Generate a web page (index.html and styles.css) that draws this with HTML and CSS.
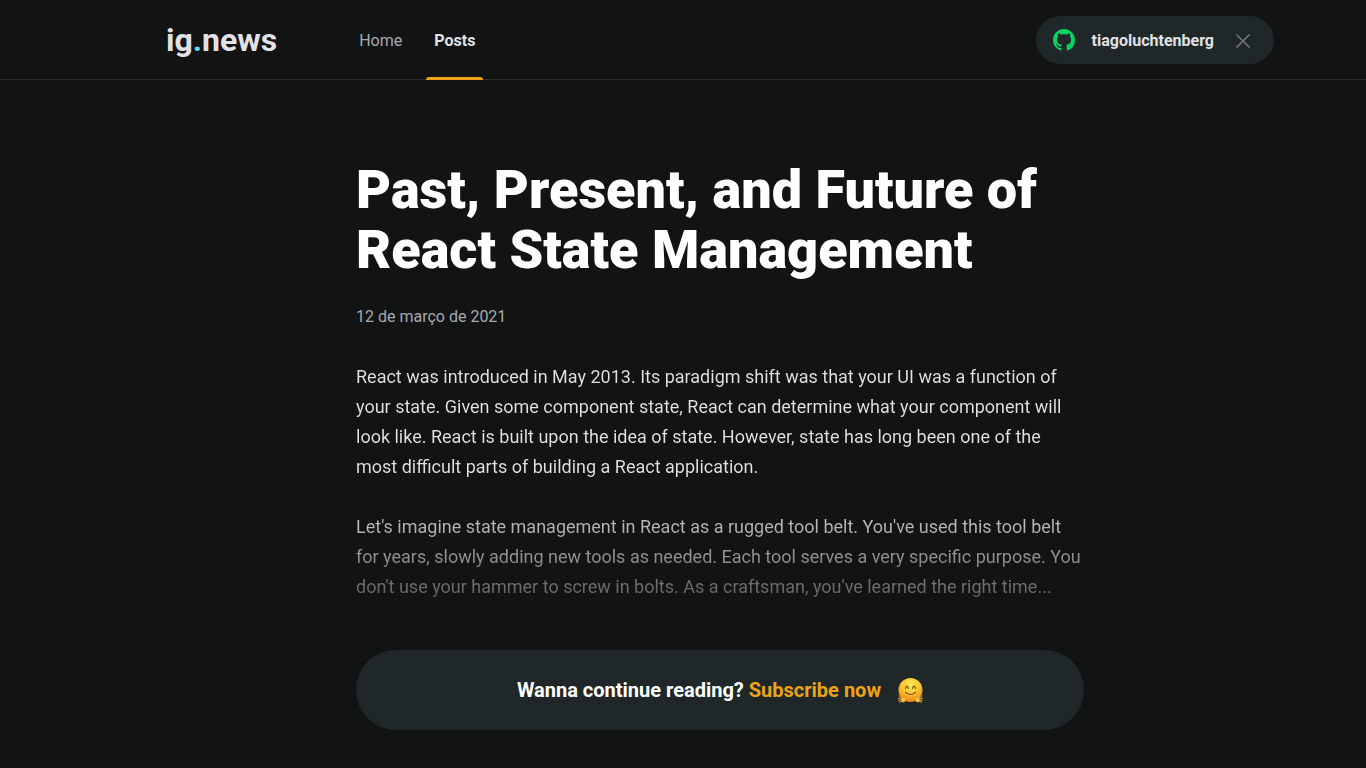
FILE: index.html
```html
<!DOCTYPE html>
<html lang="en">
<head>
  <meta charset="utf-8">
  <meta name="viewport" content="width=device-width, initial-scale=1">
  <title>Past, Present, and Future of React State Management | ig.news</title>
  <link rel="stylesheet" href="styles.css">
</head>
<body>
  <header class="header">
    <div class="header-content">
      <a class="logo" href="#">ig<span class="logo-dot">.</span>news</a>
      <nav class="nav">
        <a class="nav-link" href="#">Home</a>
        <a class="nav-link active" href="#">Posts</a>
      </nav>
      <button class="user-button" type="button">
        <svg class="github-icon" viewBox="0 0 16 16" aria-hidden="true"><path fill="#04d361" d="M8 0C3.58 0 0 3.58 0 8c0 3.54 2.29 6.53 5.47 7.59.4.07.55-.17.55-.38 0-.19-.01-.82-.01-1.49-2.01.37-2.53-.49-2.69-.94-.09-.23-.48-.94-.82-1.13-.28-.15-.68-.52-.01-.53.63-.01 1.08.58 1.23.82.72 1.21 1.87.87 2.33.66.07-.52.28-.87.51-1.07-1.78-.2-3.64-.89-3.64-3.95 0-.87.31-1.59.82-2.15-.08-.2-.36-1.02.08-2.12 0 0 .67-.21 2.2.82.64-.18 1.32-.27 2-.27s1.36.09 2 .27c1.53-1.04 2.2-.82 2.2-.82.44 1.1.16 1.92.08 2.12.51.56.82 1.27.82 2.15 0 3.07-1.87 3.75-3.65 3.95.29.25.54.73.54 1.48 0 1.07-.01 1.93-.01 2.2 0 .21.15.46.55.38A8.01 8.01 0 0 0 16 8c0-4.42-3.58-8-8-8z"/></svg>
        <span class="user-name">tiagoluchtenberg</span>
        <svg class="close-icon" viewBox="0 0 16 16" aria-hidden="true"><path d="M1.5 2.5l13 13M14.5 2.5l-13 13" fill="none" stroke="#737380" stroke-width="1.7"/></svg>
      </button>
    </div>
  </header>
  <main class="main">
    <article class="post">
      <h1 class="title">Past, Present, and Future of React State Management</h1>
      <time class="date" datetime="2021-03-12">12 de março de 2021</time>
      <div class="preview">
        <p>React was introduced in May 2013. Its paradigm shift was that your UI was a function of your state. Given some component state, React can determine what your component will look like. React is built upon the idea of state. However, state has long been one of the most difficult parts of building a React application.</p>
        <p>Let's imagine state management in React as a rugged tool belt. You've used this tool belt for years, slowly adding new tools as needed. Each tool serves a very specific purpose. You don't use your hammer to screw in bolts. As a craftsman, you've learned the right time...</p>
      </div>
      <div class="continue">
        <span>Wanna continue reading? <a class="subscribe" href="#">Subscribe now</a></span>
        <svg class="emoji" viewBox="0 0 26 26" role="img" aria-label="Hugging face">
          <defs>
            <radialGradient id="face" cx=".5" cy=".3" r=".72">
              <stop offset="0" stop-color="#ffe95a"/>
              <stop offset=".5" stop-color="#fdc42f"/>
              <stop offset="1" stop-color="#ee7f12"/>
            </radialGradient>
          </defs>
          <circle cx="13.5" cy="13" r="12" fill="url(#face)"/>
          <path d="M8.5 11.3c.4-3 2.5-3 2.9 0M15.6 11.3c.4-3 2.5-3 2.9 0" fill="none" stroke="#7a4a0c" stroke-width="1.2" stroke-linecap="round"/>
          <path d="M8.5 15.2c2.3 3 7.7 3 10 0" fill="none" stroke="#7a4a0c" stroke-width="1.1" stroke-linecap="round"/>
          <g fill="none" stroke="#eda63c" stroke-width="1" stroke-linecap="round">
            <path d="M5 21.2L1.8 18.8M4.8 22L1.2 21.2M4.8 23L1.4 23.2M5.1 24L2.3 25.2M5.5 21.2l-1.3-3"/>
            <path d="M22 21.2l3.2-2.4M22.2 22l3.3-.8M22.2 23l3.2.2M21.9 24l2.8 1.2M21.5 21.2l1.3-3"/>
          </g>
          <path d="M4.5 21.4c1.6-1.8 4.4-.6 4.2 1.7-.2 2.4-3.4 2.8-4.5 1.2zM22.5 21.4c-1.6-1.8-4.4-.6-4.2 1.7.2 2.4 3.4 2.8 4.5 1.2z" fill="#fcc944" stroke="#d97a16" stroke-width=".4"/>
        </svg>
      </div>
    </article>
  </main>
</body>
</html>
```
FILE: styles.css
```css
:root {
  --background: #121414;
  --surface: #1f2729;
  --line: #2b2e2e;
  --text: #e1e1e6;
  --muted: #a8a8b3;
  --accent: #eba417;
  --page-offset: 74px;
}

* {
  box-sizing: border-box;
  margin: 0;
  padding: 0;
}

body {
  background: var(--background);
  color: var(--text);
  font-family: Roboto, sans-serif;
  font-size: 16px;
}

a {
  color: inherit;
  text-decoration: none;
}

.header {
  padding-left: var(--page-offset);
  border-bottom: 1px solid var(--line);
}

.header-content {
  display: flex;
  align-items: center;
  max-width: 1108px;
  height: 79px;
  margin: 0 auto;
}

.logo {
  font-size: 32px;
  font-weight: 700;
  line-height: 40px;
}

.logo-dot {
  color: #61dafb;
}

.nav {
  display: flex;
  align-self: stretch;
  gap: 16px;
  margin-left: 74px;
}

.nav-link {
  position: relative;
  padding: 0 8px;
  color: var(--muted);
  line-height: 82px;
}

.nav-link.active {
  color: var(--text);
  font-weight: 700;
}

.nav-link.active::after {
  content: "";
  position: absolute;
  bottom: -1px;
  left: 0;
  width: 100%;
  height: 3px;
  border-radius: 3px 3px 0 0;
  background: var(--accent);
}

.user-button {
  display: flex;
  align-items: center;
  height: 48px;
  margin-left: auto;
  padding: 0 23px 0 17px;
  border: 0;
  border-radius: 24px;
  background: var(--surface);
  color: var(--text);
  font: inherit;
  font-weight: 700;
  cursor: pointer;
}

.user-name {
  padding-top: 2px;
}

.github-icon {
  width: 22px;
  height: 22px;
  margin-right: 17px;
}

.close-icon {
  width: 16px;
  height: 16px;
  margin-left: 21px;
}

.main {
  padding: 80px 0 38px var(--page-offset);
}

.post {
  max-width: 728px;
  margin: 0 auto;
}

.title {
  color: #fff;
  font-size: 54px;
  font-weight: 900;
  line-height: 60px;
}

.date {
  display: block;
  margin-top: 24px;
  color: var(--muted);
  line-height: 26px;
}

.preview {
  margin-top: 32px;
  font-size: 18px;
  line-height: 30px;
  background: linear-gradient(var(--text) 54%, rgba(225, 225, 230, 0.34));
  background-clip: text;
  -webkit-background-clip: text;
  color: transparent;
}

.preview p + p {
  margin-top: 30px;
}

.continue {
  display: flex;
  align-items: center;
  justify-content: center;
  gap: 16px;
  height: 80px;
  margin-top: 48px;
  border-radius: 40px;
  background: var(--surface);
  color: #fff;
  font-size: 20px;
  font-weight: 700;
}

.subscribe {
  color: var(--accent);
}

.emoji {
  width: 26px;
  height: 26px;
}
```
